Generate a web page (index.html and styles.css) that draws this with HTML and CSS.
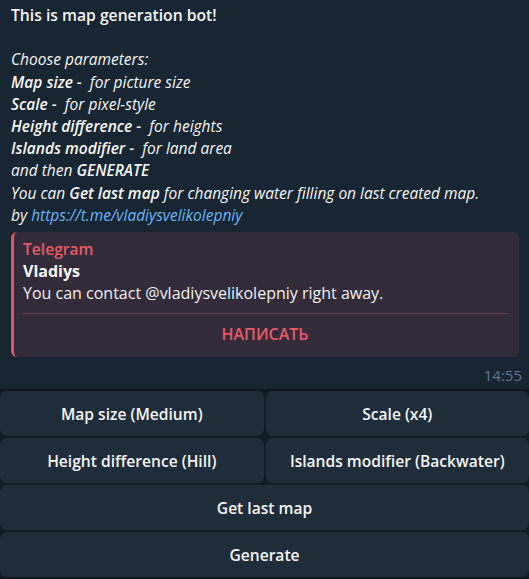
FILE: index.html
```html
<!DOCTYPE html>
<html>
<head>
<meta charset="utf-8">
<link rel="stylesheet" href="styles.css">
</head>
<body>
<div class="chat">
  <div class="bubble">
    <div class="text">
      <div class="line strong">This is map generation bot!</div>
      <div class="line">&nbsp;</div>
      <div class="line it">Choose parameters:</div>
      <div class="line it"><b>Map size - </b>&nbsp;for picture size</div>
      <div class="line it"><b>Scale - </b>&nbsp;for pixel-style</div>
      <div class="line it"><b>Height difference - </b>&nbsp;for heights</div>
      <div class="line it"><b>Islands modifier - </b>&nbsp;for land area</div>
      <div class="line it">and then <b>GENERATE</b></div>
      <div class="line it">You can <b>Get last map</b> for changing water filling on last created map.</div>
      <div class="line it">by <a class="link" href="#">https://t.me/vladiysvelikolepniy</a></div>
    </div>
    <div class="quote">
      <div class="q-site">Telegram</div>
      <div class="q-title">Vladiys</div>
      <div class="q-desc">You can contact @vladiysvelikolepniy right away.</div>
      <div class="q-sep"></div>
      <div class="q-btn">НАПИСАТЬ</div>
    </div>
    <div class="meta"><span class="time">14:55</span></div>
  </div>
  <div class="keyboard">
    <div class="kb-btn">Map size (Medium)</div>
    <div class="kb-btn">Scale (x4)</div>
    <div class="kb-btn">Height difference (Hill)</div>
    <div class="kb-btn">Islands modifier (Backwater)</div>
    <div class="kb-btn wide">Get last map</div>
    <div class="kb-btn wide">Generate</div>
  </div>
</div>
</body>
</html>
```

FILE: styles.css
```css
html, body {
  margin: 0;
  padding: 0;
  background: #0e1621;
}
body {
  width: 529px;
  height: 579px;
  overflow: hidden;
  font-family: "Open Sans", "Noto Sans", sans-serif;
  color: #f5f5f5;
}
.chat {
  display: flex;
  flex-direction: column;
}
.bubble {
  background: #182533;
  padding: 4px 7px 0 11px;
  height: 385px;
  box-sizing: content-box;
}
.text {
  font-size: 15.7px;
  line-height: 22.2px;
}
.line {
  white-space: nowrap;
}
.strong {
  font-weight: 600;
}
.it {
  font-style: italic;
  font-size: 15.5px;
}
.it b {
  font-weight: 600;
}
.link {
  color: #6ab3f3;
  text-decoration: none;
}
.quote {
  margin-top: 6px;
  margin-right: 3px;
  background: #332b3a;
  border-left: 3px solid #e3545f;
  border-radius: 6px;
  padding: 6px 12px 0 9px;
  height: 119px;
  box-sizing: content-box;
  font-size: 16px;
  line-height: 22px;
}
.q-site {
  color: #e65a67;
  font-weight: 600;
  font-size: 15.6px;
}
.q-title {
  font-weight: 700;
  color: #f5f5f5;
}
.q-desc {
  color: #f0f0f0;
}
.q-sep {
  height: 1px;
  background: #6a3e48;
  margin-top: 9px;
}
.q-btn {
  text-align: center;
  color: #e65a67;
  font-weight: 600;
  line-height: 40px;
}
.meta {
  display: flex;
  justify-content: flex-end;
  padding-top: 8px;
}
.time {
  color: #62778b;
  font-size: 15px;
  line-height: 20px;
}
.keyboard {
  margin-top: 2px;
  display: grid;
  grid-template-columns: 1fr 1fr;
  gap: 2px;
  background: #121c27;
}
.kb-btn {
  background: #1f2c3a;
  height: 45px;
  border-radius: 7px;
  display: flex;
  align-items: center;
  justify-content: center;
  font-size: 15.6px;
  font-weight: 600;
  color: #f5f5f5;
}
.kb-btn.wide {
  grid-column: 1 / 3;
}
```
